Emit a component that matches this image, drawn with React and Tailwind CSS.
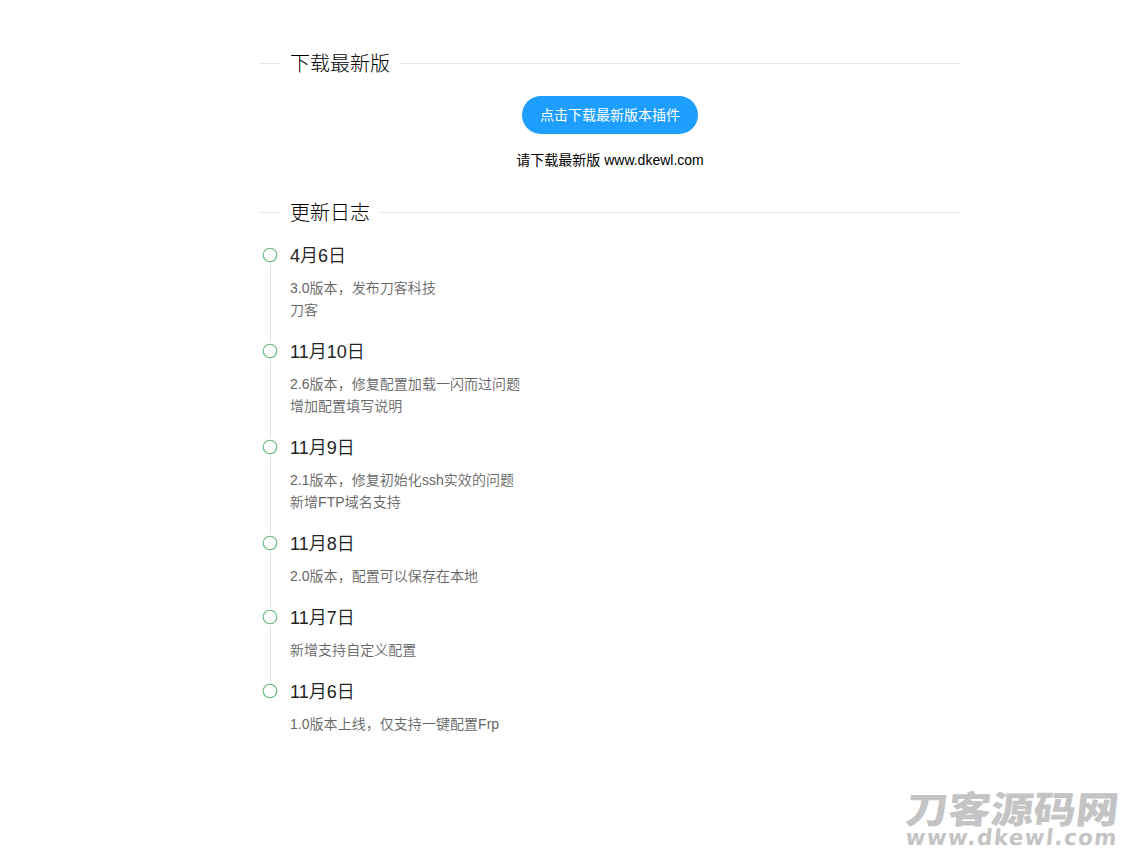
const logs = [
  { date: '4月6日', lines: ['3.0版本，发布刀客科技', '刀客'] },
  { date: '11月10日', lines: ['2.6版本，修复配置加载一闪而过问题', '增加配置填写说明'] },
  { date: '11月9日', lines: ['2.1版本，修复初始化ssh实效的问题', '新增FTP域名支持'] },
  { date: '11月8日', lines: ['2.0版本，配置可以保存在本地'] },
  { date: '11月7日', lines: ['新增支持自定义配置'] },
  { date: '11月6日', lines: ['1.0版本上线，仅支持一键配置Frp'] },
];

function SectionTitle({ children }) {
  return (
    <div className="flex h-[30px] items-center gap-[10px]">
      <span className="h-px w-5 bg-[#e6e6e6]" />
      <h2 className="pt-0.5 text-[20px] leading-[30px] font-light whitespace-nowrap text-black">{children}</h2>
      <span className="h-px flex-1 bg-[#e6e6e6]" />
    </div>
  );
}

function LogItem({ date, lines, last }) {
  return (
    <li className="flex">
      <div className="flex w-5 shrink-0 flex-col items-center">
        <svg className="mt-[3px] h-4 w-4 shrink-0" viewBox="0 0 16 16" fill="none">
          <circle cx="8" cy="8" r="6.8" stroke="#5FB878" strokeWidth="1.1" />
        </svg>
        {!last && <span className="mt-[2px] -mb-px ml-px w-px flex-1 bg-[#e2e2e2]" />}
      </div>
      <div className="ml-[10px] pt-px pb-[19px]">
        <h3 className="mb-[10px] h-[22px] text-[18px] leading-[22px] font-[350] text-[#222]">{date}</h3>
        {lines.map((line) => (
          <p key={line} className="h-[22px] text-[14px] leading-[22px] tracking-[0.04px] font-[350] whitespace-nowrap text-[#666]">{line}</p>
        ))}
      </div>
    </li>
  );
}

export default function App() {
  return (
    <div className="flex h-[852px] flex-col overflow-hidden bg-white font-['Liberation_Sans','Noto_Sans_CJK_SC',sans-serif]">
      <main className="ml-[260px] w-[700px] pt-12">
        <SectionTitle>下载最新版</SectionTitle>
        <div className="mt-[18px] flex flex-col items-center">
          <button className="h-[38px] rounded-full bg-[#1E9FFF] px-[18px] text-[14px] leading-[38px] text-white">
            点击下载最新版本插件
          </button>
          <p className="mt-[15px] text-[14px] leading-[22px] text-black">请下载最新版 www.dkewl.com</p>
        </div>
        <div className="mt-[26px]">
          <SectionTitle>更新日志</SectionTitle>
        </div>
        <ul className="mt-[17px]">
          {logs.map((log, i) => (
            <LogItem key={log.date} {...log} last={i === logs.length - 1} />
          ))}
        </ul>
      </main>
      <footer className="mt-auto self-end text-[#c4c4c4]">
        <svg width="240" height="72" viewBox="0 0 240 72" fill="currentColor">
          <text x="19" y="43" fontFamily="Noto Sans CJK SC" fontWeight="900" fontSize="37" textLength="213" lengthAdjust="spacingAndGlyphs" transform="skewX(-6)">刀客源码网</text>
          <text x="22" y="65.5" fontFamily="DejaVu Sans" fontWeight="bold" fontSize="22" textLength="212" lengthAdjust="spacingAndGlyphs" letterSpacing="1.5" transform="skewX(-6)">www.dkewl.com</text>
        </svg>
      </footer>
    </div>
  );
}
